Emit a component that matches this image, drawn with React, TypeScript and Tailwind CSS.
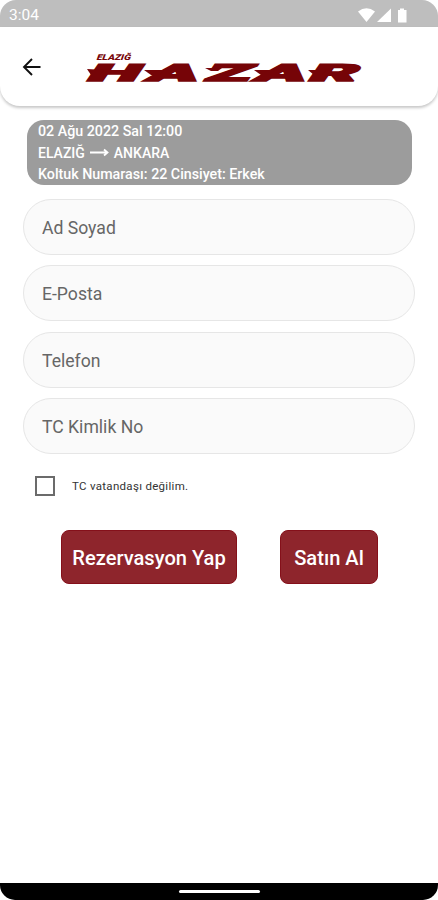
import { useState } from 'react'

const fields = ['Ad Soyad', 'E-Posta', 'Telefon', 'TC Kimlik No']

function StatusBar() {
  return (
    <div className="flex h-[27px] shrink-0 items-center justify-between rounded-t-[16px] bg-[#bebebe] pt-[3px] pr-[31px] pl-[9px]">
      <span className="pt-px text-[15.5px] leading-none text-white">3:04</span>
      <svg width="49" height="15" viewBox="0 0 49 15" fill="white">
        <path d="M0 3.5 Q8.5 -3 17 3.5 L8.5 14 Z" />
        <path d="M19 14 L33 0.5 V14 Z" />
        <path d="M40 2 H42 V0.5 H46 V2 H48.5 V14.5 H40 Z" />
      </svg>
    </div>
  )
}

function Logo() {
  return (
    <svg className="overflow-visible" width="310" height="50" viewBox="82 42 310 50" fill="#760407">
      <g transform="translate(96 59.5) skewX(-20)">
        <text
          fontFamily="Roboto, sans-serif"
          fontSize="8"
          fontWeight="900"
          textLength="34"
          lengthAdjust="spacingAndGlyphs"
        >
          ELAZIĞ
        </text>
      </g>
      <g transform="translate(84 80.8) skewX(-35) scale(3.1 1)">
        <text
          fontFamily="Roboto, sans-serif"
          fontSize="23.5"
          fontWeight="900"
          stroke="#760407"
          strokeWidth="1.6"
          x="0.2 19.4 38.3 54.2 71.6"
        >
          HAZAR
        </text>
      </g>
      {/* speed lines */}
      <path d="M87 69 L104 70 L100 75 H91 Z" />
      <path d="M144 70 L164 70 L160 75 H151 Z" />
      <path d="M205 68 L222 68 L218 71 H211 Z" />
      <path d="M254 70 L275 70 L270 75 H261 Z" />
      <path d="M308 70 L326 70 L322 75 H314 Z" />
    </svg>
  )
}

function App() {
  const [notCitizen, setNotCitizen] = useState(false)

  return (
    <div className="flex h-[900px] w-[438px] flex-col overflow-hidden bg-white font-[Roboto,sans-serif]">
      <StatusBar />
      <header className="flex h-[79px] shrink-0 items-center rounded-b-[20px] bg-white pl-[22px] shadow-[0_2px_3px_rgba(0,0,0,0.22)]">
        <button aria-label="Geri" className="mr-10">
          <svg width="20" height="20" viewBox="0 0 20 20" fill="none" stroke="#111" strokeWidth="1.9">
            <path d="M18.5 10 H2.5 M10 2 L2 10 L10 18" />
          </svg>
        </button>
        <Logo />
      </header>

      <main className="flex-1 px-[23px] pt-[14px]">
        <div className="mr-[3px] ml-1 h-[65px] rounded-[17px] bg-[#9c9c9c] pt-px pl-[11px] text-[14.25px] leading-[21.6px] font-medium text-white">
          <p>02 Ağu 2022 Sal 12:00</p>
          <p className="flex items-center text-[14px]">
            ELAZIĞ
            <svg className="mx-[5px]" width="19" height="10" viewBox="0 0 19 10" fill="none" stroke="white" strokeWidth="1.8">
              <path d="M0 4.5 H17 M14 1.5 L17.5 4.5 L14 7.5" />
            </svg>
            ANKARA
          </p>
          <p>Koltuk Numarası: 22 Cinsiyet: Erkek</p>
        </div>

        <form className="mt-[14px]">
          <div className="flex flex-col gap-[10.3px]">
            {fields.map((field) => (
              <input
                key={field}
                placeholder={field}
                className="h-14 w-full rounded-full border border-[#e6e6e6] bg-[#fafafa] px-[18px] pt-0.5 text-[17.6px] text-gray-800 placeholder:text-[#666]"
              />
            ))}
          </div>

          <label className="mt-[22px] ml-3 flex items-center gap-[17px]">
            <input
              type="checkbox"
              checked={notCitizen}
              onChange={(e) => setNotCitizen(e.target.checked)}
              className="size-5 appearance-none border-2 border-[#6b6b6b] bg-white checked:bg-[#8e252c]"
            />
            <span className="pt-0.5 text-[11.5px] tracking-[0.3px] text-[#333]">TC vatandaşı değilim.</span>
          </label>

          <div className="mt-[34px] ml-[38px] flex gap-[43px] text-[20.1px] font-medium text-white">
            <button type="button" className="h-[54px] w-44 rounded-lg border border-[#85101a] bg-[#8e252c] pt-0.5">
              Rezervasyon Yap
            </button>
            <button type="button" className="h-[54px] w-[98px] rounded-lg border border-[#85101a] bg-[#8e252c] pt-0.5">
              Satın Al
            </button>
          </div>
        </form>
      </main>

      <footer className="flex h-[17px] shrink-0 items-center justify-center rounded-b-[15px] bg-black">
        <div className="h-[3px] w-[81px] rounded-full bg-white" />
      </footer>
    </div>
  )
}

export default App
